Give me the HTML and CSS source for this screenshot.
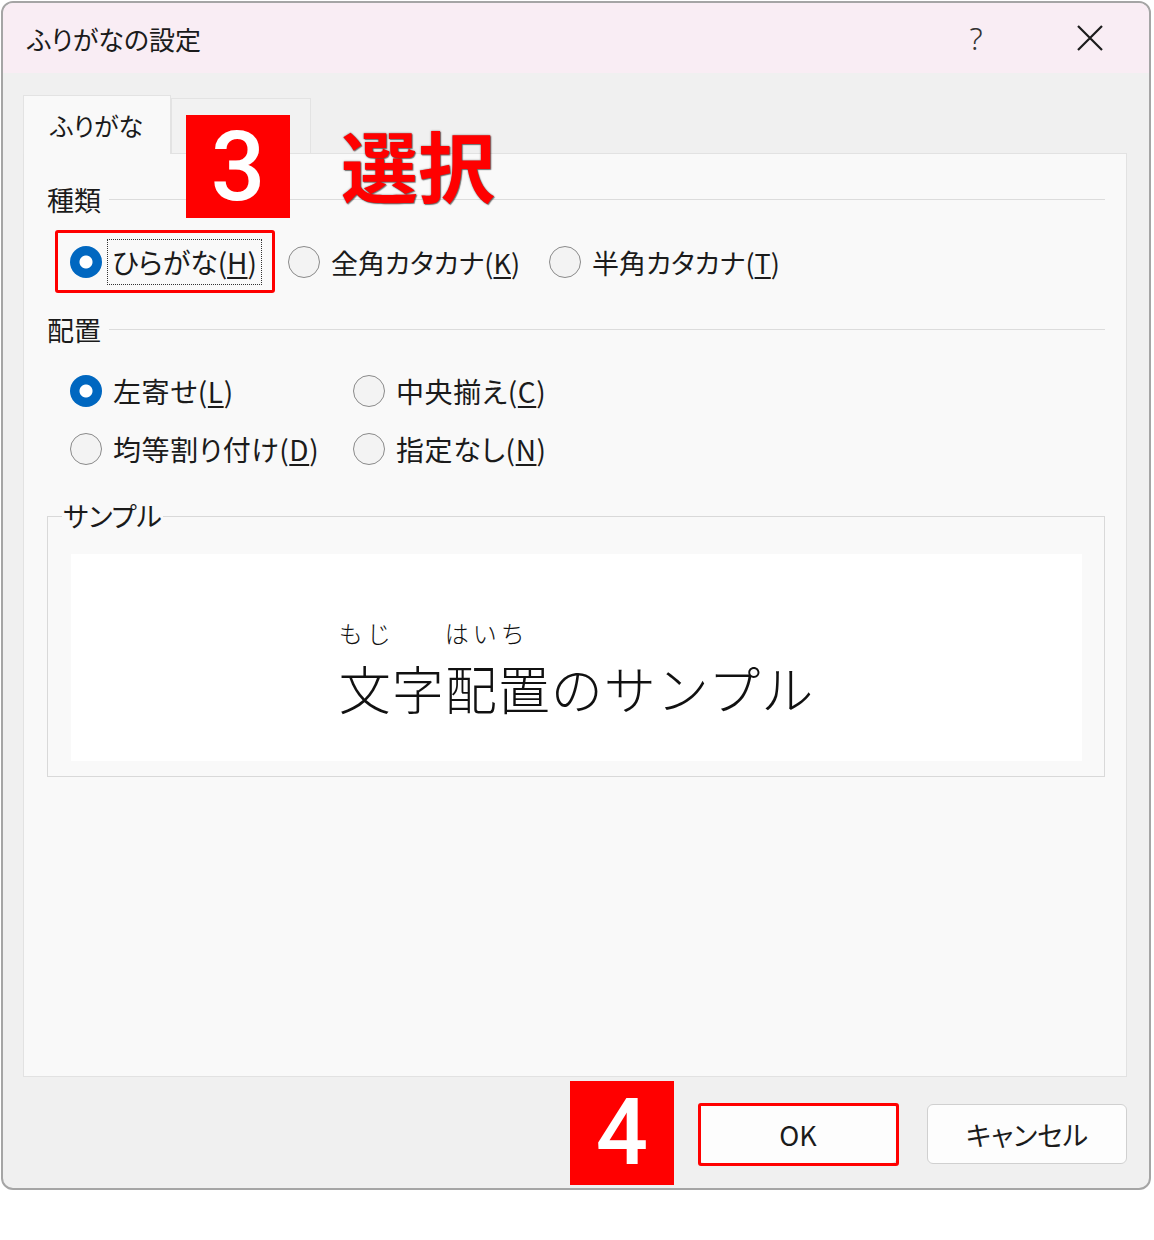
FILE: index.html
```html
<!DOCTYPE html>
<html lang="ja">
<head>
    <meta charset="UTF-8">
    <meta name="viewport" content="width=device-width, initial-scale=1.0">
    <title>ふりがなの設定</title>
    <link rel="stylesheet" href="styles.css">
</head>
<body>

<div class="dialog">
    <div class="titlebar">
        <div class="title">ふりがなの設定</div>
        <div class="help">?</div>
        <div class="close">
            <svg width="26" height="26" viewBox="0 0 26 26"><path d="M1 1L25 25M25 1L1 25" stroke="#1c1c1c" stroke-width="2.2" fill="none"/></svg>
        </div>
    </div>

    <div class="main">
        <div class="tabs">
            <div class="tab active">ふりがな</div>
            <div class="tab"></div>
        </div>

        <div class="panel">
            <div class="group-head">種類</div>
            <div class="radio-row">
                <label class="option marked">
                    <span class="radio on"></span>
                    <span class="focus">ひらがな(<u>H</u>)</span>
                    <span class="mark"></span>
                </label>
                <label class="option">
                    <span class="radio"></span>
                    <span>全角カタカナ(<u>K</u>)</span>
                </label>
                <label class="option">
                    <span class="radio"></span>
                    <span>半角カタカナ(<u>T</u>)</span>
                </label>
            </div>

            <div class="group-head second">配置</div>
            <div class="radio-grid">
                <label class="option">
                    <span class="radio on"></span>
                    <span>左寄せ(<u>L</u>)</span>
                </label>
                <label class="option">
                    <span class="radio"></span>
                    <span>中央揃え(<u>C</u>)</span>
                </label>
                <label class="option">
                    <span class="radio"></span>
                    <span>均等割り付け(<u>D</u>)</span>
                </label>
                <label class="option">
                    <span class="radio"></span>
                    <span>指定なし(<u>N</u>)</span>
                </label>
            </div>

            <fieldset class="sample">
                <legend>サンプル</legend>
                <div class="sample-box">
                    <div class="sample-text"><span class="rb"><span class="rt">もじ</span>文字</span><span class="rb"><span class="rt">はいち</span>配置</span>のサンプル</div>
                </div>
            </fieldset>
        </div>

        <div class="footer">
            <button class="btn ok">OK<span class="mark"></span></button>
            <button class="btn">キャンセル</button>
        </div>
    </div>

    <!-- annotations -->
    <div class="badge step3">3</div>
    <div class="pick">選択</div>
    <div class="badge step4">4</div>
</div>

</body>
</html>
```

FILE: styles.css
```css
* {
    box-sizing: border-box;
}
body {
    margin: 0;
    background: #fff;
    font-family: "Noto Sans CJK JP", "Noto Sans", sans-serif;
    color: #1b1b1b;
}
.dialog {
    position: relative;
    margin: 1px 0 0 1px;
    width: 1150px;
    height: 1189px;
    border: 2px solid #a5a5a5;
    border-radius: 12px;
    background: #f0f0f0;
    overflow: hidden;
}
.titlebar {
    display: flex;
    align-items: center;
    height: 70px;
    padding-left: 24px;
    background: #f9edf4;
}
.title {
    flex: 1;
    font-size: 26px;
    font-feature-settings: "palt";
}
.help {
    width: 60px;
    margin-right: 36px;
    text-align: center;
    font-family: "Noto Sans", sans-serif;
    font-weight: 300;
    font-size: 31px;
    color: #333;
}
.close {
    width: 96px;
    margin-right: 11px;
    display: flex;
    justify-content: center;
}
.close svg {
    display: block;
}
.main {
    padding: 22px 22px 0 20px;
}
.tabs {
    display: flex;
    align-items: flex-end;
}
.tab {
    width: 140px;
    height: 55px;
    background: #f2f2f2;
    border: 1px solid #e3e3e3;
    border-bottom: none;
    font-size: 25px;
    line-height: 36px;
    padding: 10px 0 0 26px;
    font-feature-settings: "palt";
}
.tab.active {
    width: 148px;
    height: 59px;
    margin-bottom: -1px;
    background: #f9f9f9;
    position: relative;
    z-index: 1;
    padding-top: 11px;
}
.panel {
    height: 924px;
    background: #f9f9f9;
    border: 1px solid #e2e2e2;
    padding: 27px 21px 0 23px;
}
.group-head {
    display: flex;
    align-items: center;
    gap: 8px;
    height: 36px;
    font-size: 27px;
}
.group-head::after {
    content: "";
    flex: 1;
    height: 1px;
    background: #dcdcdc;
}
.group-head.second {
    margin-top: 27px;
}
.radio-row {
    display: flex;
    align-items: center;
    height: 44px;
    margin-top: 23px;
    padding-left: 23px;
}
.radio-row .option {
    margin-right: 29px;
    font-size: 27px;
    letter-spacing: 0;
}
.radio-grid {
    display: grid;
    grid-template-columns: 283px auto;
    grid-auto-rows: 44px;
    row-gap: 14px;
    margin-top: 22px;
    padding-left: 23px;
}
.option {
    position: relative;
    display: flex;
    align-items: center;
    gap: 11px;
    font-size: 28px;
    letter-spacing: 0.6px;
    font-feature-settings: "palt";
}
.option u {
    text-underline-offset: 3px;
    text-decoration-thickness: 2px;
}
.radio {
    flex: none;
    width: 32px;
    height: 32px;
    border-radius: 50%;
    border: 1.5px solid #8a8a8a;
    background: #f3f3f3;
}
.radio.on {
    border: none;
    background: radial-gradient(circle, #fff 0 6px, #0067c0 7px);
}
.focus {
    margin-left: -3px;
    padding: 0 2px;
    font-size: 28px;
    outline: 1px dotted #333;
    outline-offset: 2px;
}
.option .mark {
    position: absolute;
    left: -15px;
    top: -12px;
    width: 220px;
    height: 63px;
    border: 3px solid #ff0000;
    border-radius: 3px;
}
.sample {
    margin: 27px 0 0;
    padding: 20px 22px 15px 23px;
    border: 1px solid #d9d9d9;
    min-width: 0;
}
.sample legend {
    margin-left: -9px;
    padding: 0 1px;
    font-size: 27px;
    line-height: 36px;
    font-feature-settings: "palt";
}
.sample-box {
    height: 207px;
    padding-top: 20px;
    background: #fff;
    display: flex;
    justify-content: center;
    align-items: center;
}
.sample-text {
    font-size: 52px;
    font-weight: 300;
    letter-spacing: 1px;
    line-height: 60px;
    color: #111;
}
.rb {
    display: inline-block;
}
.rt {
    display: block;
    font-size: 24px;
    letter-spacing: 4px;
    line-height: 30px;
    margin-bottom: 10px;
}
.footer {
    display: flex;
    justify-content: flex-end;
    gap: 29px;
    padding-top: 27px;
}
.btn {
    position: relative;
    width: 200px;
    height: 60px;
    border: 1px solid #d0d0d0;
    border-radius: 6px;
    background: #fdfdfd;
    font-family: inherit;
    font-size: 27px;
    color: #1b1b1b;
    font-feature-settings: "palt";
}
.btn .mark {
    position: absolute;
    left: -1px;
    top: -2px;
    width: 201px;
    height: 63px;
    border: 3px solid #ff0000;
    border-radius: 3px;
}
.badge {
    position: absolute;
    width: 104px;
    height: 104px;
    background: #ff0000;
    color: #fff;
    text-align: center;
    font-family: Roboto, "Liberation Sans", sans-serif;
    font-weight: 500;
    font-size: 96px;
    line-height: 104px;
}
.step3 {
    left: 183px;
    top: 112px;
    height: 103px;
}
.step4 {
    left: 567px;
    top: 1078px;
    font-size: 92px;
}
.pick {
    position: absolute;
    left: 338px;
    top: 118px;
    font-size: 77px;
    font-weight: bold;
    line-height: 86px;
    color: #ff0000;
    text-shadow: 0 0 2px rgba(0, 0, 0, 0.55), 1px 1px 1px rgba(0, 0, 0, 0.45);
}
```
